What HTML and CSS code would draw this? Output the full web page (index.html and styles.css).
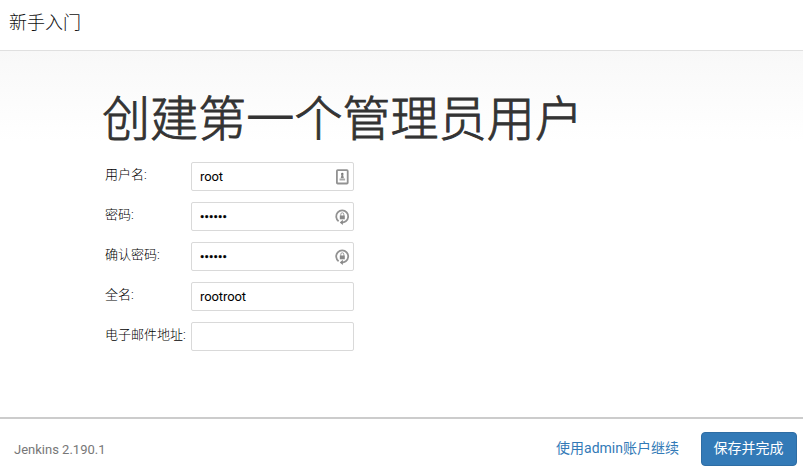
FILE: index.html
```html
<!DOCTYPE html>
<html lang="zh-CN">
<head>
<meta charset="utf-8">
<title>新手入门</title>
<link rel="stylesheet" href="styles.css">
</head>
<body>
<header class="header">新手入门</header>
<main class="content">
<h1 class="title">创建第一个管理员用户</h1>
<form class="form">
<label class="label" for="user">用户名:</label>
<div class="field"><input id="user" class="input" value="root"><svg class="icon" viewBox="0 0 16 16"><rect x="2.900" y="1.200" width="10.800" height="13.300" rx=".8" fill="none" stroke="#929292" stroke-width="1.800"/><circle cx="8.300" cy="5" r="1.200" fill="#777"/><path d="M7.700 5h1.200l1 4.200H6.700z" fill="#888"/><path d="M5.500 9.500h5.600v2H5.500z" fill="#aaa"/></svg></div>
<label class="label" for="pass">密码:</label>
<div class="field"><input id="pass" class="input" type="password" value="secret"><svg class="icon" viewBox="0 0 16 16"><path d="M4.600 12.200A6 6 0 1 1 11.800 12.200Q10 13.500 8 13.500" fill="none" stroke="#929292" stroke-width="1.800"/><path d="M8.800 10.800v5.200L5.800 13.500z" fill="#888"/><path d="M5.800 6.500h5v3.800h-5z" fill="#888"/><path d="M6.800 7V5.300a1.500 1.500 0 0 1 3 0V7" fill="none" stroke="#999"/></svg></div>
<label class="label" for="confirm">确认密码:</label>
<div class="field"><input id="confirm" class="input" type="password" value="secret"><svg class="icon" viewBox="0 0 16 16"><path d="M4.600 12.200A6 6 0 1 1 11.800 12.200Q10 13.500 8 13.500" fill="none" stroke="#929292" stroke-width="1.800"/><path d="M8.800 10.800v5.200L5.800 13.500z" fill="#888"/><path d="M5.800 6.500h5v3.800h-5z" fill="#888"/><path d="M6.800 7V5.300a1.500 1.500 0 0 1 3 0V7" fill="none" stroke="#999"/></svg></div>
<label class="label" for="name">全名:</label>
<div class="field"><input id="name" class="input" value="rootroot"></div>
<label class="label" for="mail">电子邮件地址:</label>
<div class="field"><input id="mail" class="input"></div>
</form>
</main>
<footer class="footer">
<span class="version">Jenkins 2.190.1</span>
<a class="link">使用admin账户继续</a>
<button class="save">保存并完成</button>
</footer>
</body>
</html>
```

FILE: styles.css
```css
* { box-sizing: border-box; }
body { margin: 0; height: 473px; display: flex; flex-direction: column; overflow: hidden; background: #fff; color: #333; font-family: Roboto, "Noto Sans CJK SC", sans-serif; font-size: 13px; }
.header { height: 51px; border-bottom: 1px solid #e0e0e0; padding-left: 9px; font-size: 18px; line-height: 46px; font-weight: 300; color: #111; }
.content { height: 366px; padding: 42px 0 0 101px; background: linear-gradient(#f8f8f8, #fff 90px); }
.title { margin: 0; padding-left: 1px; font-size: 48px; line-height: 53px; font-weight: 300; -webkit-text-stroke: .9px #333; letter-spacing: .1px; white-space: nowrap; }
.form { margin-top: 16px; padding-left: 4px; display: grid; grid-template-columns: 86px 163px; grid-auto-rows: 40px; }
.label { line-height: 26px; font-weight: 300; color: #000; white-space: nowrap; }
.field { position: relative; height: 29px; }
.input { width: 163px; height: 29px; border: 1px solid #d9d9d9; border-radius: 2px; padding: 0 8px; background: #fff; font: 13px Roboto, sans-serif; letter-spacing: -.1px; color: #000; }
.input[type="password"] { letter-spacing: .1px; -webkit-text-stroke: .4px #000; }
.icon { position: absolute; right: 4px; top: 7px; width: 16px; height: 16px; }
.footer { height: 56px; border-top: 2px solid #ccc; display: flex; align-items: center; padding: 6px 6px 0 14px; }
.version { color: #777; }
.link { margin: 0 22px 4px auto; color: #337ab7; font-size: 14px; }
.save { width: 96px; height: 34px; padding: 0 1px 4px 0; border: 1px solid #2e6da4; border-radius: 4px; background: #337ab7; color: #fff; font: 14px Roboto, "Noto Sans CJK SC", sans-serif; }
```
